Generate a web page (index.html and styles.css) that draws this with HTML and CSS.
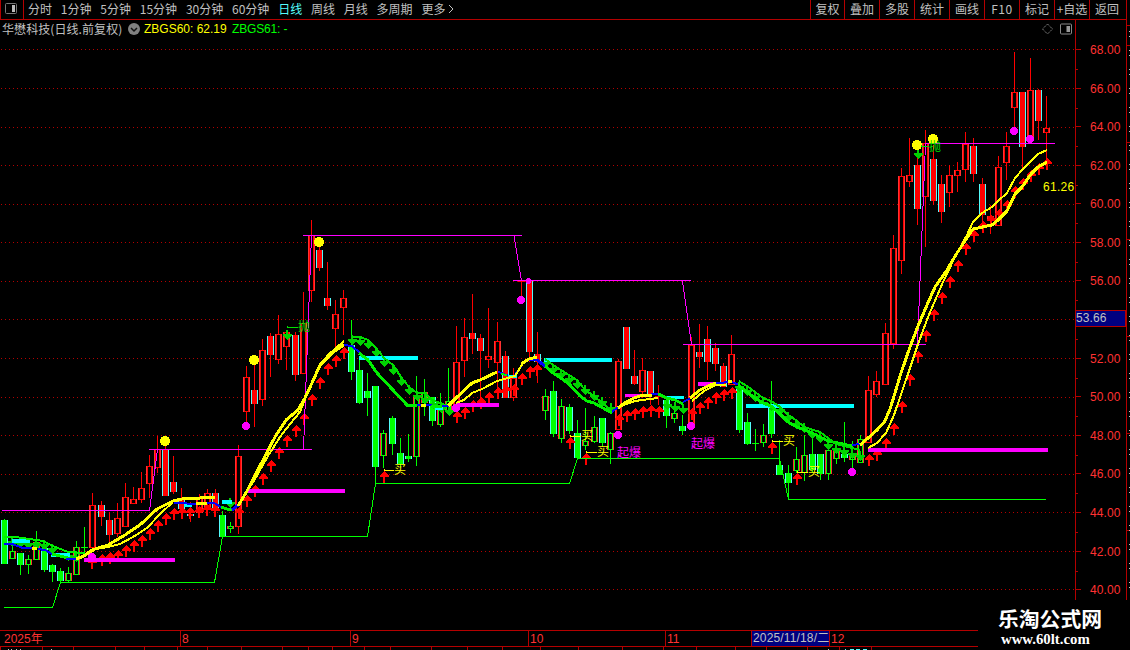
FILE: index.html
```html
<!DOCTYPE html>
<html lang="zh-CN">
<head>
    <meta charset="UTF-8">
    <meta name="viewport" content="width=device-width, initial-scale=1.0">
    <title>华懋科技 日线</title>
    <link rel="stylesheet" href="styles.css">
</head>
<body>

    <div class="terminal">
        <div class="main">
            <div class="toolbar">
                <div class="panel-toggle">
                    <svg width="12" height="11" viewBox="0 0 12 11"><rect x="0.5" y="0.5" width="11" height="10" rx="1" fill="none" stroke="#777"/><rect x="7" y="2" width="3" height="7" fill="#bbb"/></svg>
                </div>
                <div class="periods">
                    <span>分时</span><span>1分钟</span><span>5分钟</span><span>15分钟</span><span>30分钟</span><span>60分钟</span><span class="active">日线</span><span>周线</span><span>月线</span><span>多周期</span><span>更多<svg class="more" width="8" height="10" viewBox="0 0 8 10"><path d="M2 1L6 5L2 9" fill="none" stroke="#c0c0c0"/></svg></span>
                </div>
                <div class="actions">
                    <span class="first">复权</span><span>叠加</span><span>多股</span><span>统计</span><span>画线</span><span class="key">F10</span><span>标记</span><span>+自选</span><span class="last">返回</span>
                </div>
            </div>

            <div class="body">
                <div class="plot">
                    <div class="info">
                        <span class="stock">华懋科技(日线.前复权)</span>
                        <svg width="12" height="12" viewBox="0 0 12 12"><circle cx="6" cy="6" r="6" fill="#808080"/><path d="M3 5L6 8L9 5" fill="none" stroke="#111" stroke-width="1.5"/></svg>
                        <span class="v60">ZBGS60: 62.19</span>
                        <span class="v61">ZBGS61: -</span>
                        <svg class="tools" width="30" height="12" viewBox="0 0 30 12"><path d="M5.5 1L10.5 6L5.5 11L0.5 6Z" fill="none" stroke="#888" stroke-dasharray="1.4 0.8"/><rect x="18.5" y="1" width="11" height="10" rx="1" fill="none" stroke="#888"/><rect x="24.5" y="3" width="3.5" height="6" fill="#999"/></svg>
                    </div>
                    <svg id="chart" class="chart" width="1075" height="590" viewBox="0 40 1075 590"></svg>
                </div>
                <div class="price-axis">
                    <div class="prices" id="prices"></div>
                    <div class="cursor-price">53.66</div>
                </div>
            </div>

            <div class="time-axis">
                <div class="m1">2025年</div>
                <div class="m2">8</div>
                <div class="m3">9</div>
                <div class="m4">10</div>
                <div class="m5">11</div>
                <div class="cursor-date">2025/11/18/二</div>
                <div class="m6">12</div>
            </div>
            <svg class="bottom-strip" id="strip" width="1126" height="3" viewBox="0 647 1126 3"></svg>
        </div>
        <svg class="side" id="side" width="4" height="650" viewBox="1126 0 4 650"></svg>
        <div class="brand">
            <div class="brand-name">乐淘公式网</div>
            <div class="brand-url">www.60lt.com</div>
        </div>
    </div>

    <script src="script.js"></script>
</body>
</html>
```
FILE: styles.css
```css
body {
    margin: 0;
    background: #000;
    color: #c0c0c0;
    font-family: "Liberation Sans", "Noto Sans CJK SC", sans-serif;
    font-size: 12px;
    overflow: hidden;
}

.terminal {
    position: relative;
    display: flex;
    width: 1130px;
    height: 650px;
    overflow: hidden;
}

.main {
    width: 1126px;
}

svg {
    display: block;
    flex: none;
}

/* Toolbar */
.toolbar {
    display: flex;
    box-sizing: border-box;
    height: 20px;
    border-bottom: 1px solid #b40000;
    line-height: 18px;
    white-space: nowrap;
    font-family: "Noto Sans CJK SC", sans-serif;
}

.panel-toggle {
    box-sizing: border-box;
    width: 24px;
    padding: 3px 0 0 4px;
    border-left: 1px solid #b40000;
    border-right: 1px solid #b40000;
}

.periods {
    display: flex;
    flex: 1;
    gap: 8.8px;
    padding-left: 4px;
}

.periods .active {
    color: #54fcfc;
}

.more {
    display: inline-block;
    margin-left: 2px;
}

.actions {
    display: flex;
}

.actions span {
    box-sizing: border-box;
    width: 35px;
    border-left: 1px solid #b40000;
    text-align: center;
}

.actions .first {
    width: 34px;
}

.actions .key {
    letter-spacing: 0.6px;
}

.actions .last {
    width: 37px;
    padding-right: 2px;
}

/* Chart */
.body {
    display: flex;
    height: 610px;
}

.plot {
    width: 1075px;
}

.info {
    display: flex;
    align-items: center;
    box-sizing: border-box;
    height: 20px;
    padding: 0 3px 2px 2px;
    line-height: 18px;
    white-space: nowrap;
}

.stock {
    width: 126px;
    font-family: "Noto Sans CJK SC", sans-serif;
    letter-spacing: 0.08px;
}

.v60 {
    width: 84px;
    margin-left: 4px;
    color: #ffff00;
}

.v61 {
    margin-left: 4px;
    color: #00ff00;
    letter-spacing: -0.15px;
}

.tools {
    margin-left: auto;
}

.chart {
    shape-rendering: crispEdges;
}

.chart text {
    font-size: 12px;
    font-family: "Noto Sans CJK SC", sans-serif;
}

.chart .last-price {
    font-family: "Liberation Sans", sans-serif;
    letter-spacing: 0.3px;
}

/* Price scale */
.price-axis {
    position: relative;
    box-sizing: border-box;
    width: 51px;
    border-left: 1px solid #b40000;
}

.prices {
    padding-top: 20px;
}

.price {
    display: flex;
    align-items: flex-start;
    height: 38.58px;
    color: #ff3232;
    line-height: 20px;
    letter-spacing: 0.1px;
}

.price::before {
    content: "";
    width: 5px;
    height: 1px;
    margin: 9px 9px 0 0;
    background: #b40000;
}

.price::after {
    content: "";
    order: -1;
    width: 2px;
    height: 1px;
    margin: 29px -2px 0 0;
    background: #b40000;
}

.cursor-price {
    position: absolute;
    top: 290px;
    left: 0;
    box-sizing: border-box;
    width: 50px;
    height: 17px;
    border: 1px solid #b40000;
    border-left: 0;
    background: #000080;
    line-height: 15px;
    letter-spacing: 0.1px;
}

/* Date scale */
.time-axis {
    display: flex;
    box-sizing: border-box;
    height: 17px;
    border-top: 1px solid #b40000;
    border-bottom: 1px solid #b40000;
    color: #ff3232;
    line-height: 16px;
    white-space: nowrap;
}

.time-axis div {
    box-sizing: border-box;
    padding-left: 1px;
    border-left: 1px solid #b40000;
}

.time-axis .m1 {
    width: 180px;
    padding-left: 4px;
    border-left: 0;
}

.time-axis .m2 {
    width: 170px;
}

.time-axis .m3 {
    width: 178px;
}

.time-axis .m4 {
    width: 137px;
}

.time-axis .m5 {
    width: 86px;
}

.time-axis .cursor-date {
    width: 78px;
    background: #000080;
    color: #c0c0c0;
    line-height: 14px;
    letter-spacing: 0.15px;
}

.time-axis .m6 {
    width: 149px;
}

.bottom-strip,
.side {
    shape-rendering: crispEdges;
}

/* Site badge */
.brand {
    position: absolute;
    left: 978px;
    top: 600px;
    box-sizing: border-box;
    width: 152px;
    height: 50px;
    padding: 6px 0 0 20px;
    background: #000;
    color: #fff;
    white-space: nowrap;
}

.brand-name {
    font: bold 20.8px/25px "Noto Sans CJK SC", sans-serif;
}

.brand-url {
    padding: 1px 0 0 3px;
    font: bold 14.8px/15px "Liberation Serif", serif;
}
```
FILE: script.js
```js
// type: r = hollow red, c = solid red, g = solid green, h = hollow green
// [x, type, high, bodyTop, bodyBottom, low]
const candles = [
    [4, "g", 519, 520, 564, 564], [12, "h", 546, 551, 559, 559], [20, "g", 553, 553, 565, 575],
    [28, "h", 555, 559, 565, 574], [36, "h", 531, 542, 560, 560], [44, "g", 540, 548, 570, 572],
    [52, "g", 564, 565, 572, 582], [60, "g", 568, 571, 581, 582], [68, "h", 567, 573, 581, 582],
    [76, "h", 541, 547, 575, 575], [84, "d", 527, 547, 548, 553], [92, "r", 493, 505, 548, 548],
    [101, "c", 501, 505, 517, 526], [109, "c", 512, 520, 535, 542], [117, "r", 503, 518, 534, 537],
    [125, "r", 483, 497, 527, 527], [133, "r", 487, 499, 504, 504], [141, "r", 472, 488, 500, 503],
    [149, "r", 455, 466, 484, 498], [157, "r", 436, 449, 468, 473], [165, "c", 445, 449, 496, 496],
    [173, "c", 456, 482, 492, 494], [181, "c", 488, 499, 509, 510], [190, "c", 502, 514, 516, 522],
    [199, "r", 494, 497, 513, 513], [207, "r", 489, 493, 508, 515], [215, "c", 489, 493, 510, 514],
    [222, "g", 511, 515, 537, 537], [230, "h", 522, 526, 529, 533], [238, "r", 445, 456, 527, 534],
    [246, "r", 366, 377, 412, 425], [254, "c", 360, 390, 404, 427], [262, "r", 339, 350, 400, 406],
    [270, "c", 333, 336, 355, 377], [278, "r", 315, 334, 360, 364], [286, "r", 332, 332, 347, 370],
    [295, "c", 332, 335, 375, 381], [303, "r", 292, 323, 374, 374], [311, "r", 220, 235, 291, 302],
    [319, "c", 245, 250, 268, 271], [327, "c", 262, 298, 306, 310], [335, "r", 300, 314, 329, 347],
    [343, "r", 290, 298, 308, 335], [351, "g", 320, 345, 372, 380], [359, "g", 358, 370, 403, 404],
    [367, "g", 373, 391, 398, 416], [375, "g", 386, 386, 467, 484], [383, "h", 430, 433, 456, 468],
    [392, "g", 416, 418, 444, 455], [400, "g", 438, 453, 464, 468], [408, "g", 434, 456, 459, 462],
    [416, "h", 376, 397, 457, 466], [424, "h", 379, 392, 403, 416], [432, "g", 397, 397, 421, 426],
    [440, "h", 393, 405, 425, 427], [448, "h", 368, 401, 411, 411], [456, "r", 326, 362, 407, 407],
    [464, "r", 318, 337, 361, 377], [472, "c", 294, 333, 339, 354], [480, "c", 334, 338, 351, 400],
    [488, "r", 308, 356, 360, 368], [497, "r", 322, 341, 363, 388], [505, "c", 351, 356, 398, 398],
    [513, "r", 368, 378, 398, 401], [521, "d2", 281, 281, 282, 300], [529, "c", 281, 281, 352, 362],
    [537, "c", 332, 354, 362, 383], [545, "h", 389, 396, 411, 420], [553, "g", 381, 391, 434, 437],
    [561, "h", 399, 406, 439, 443], [569, "g", 404, 407, 431, 434], [577, "g", 420, 433, 458, 459],
    [585, "h", 408, 441, 446, 450], [594, "h", 416, 427, 442, 443], [602, "g", 418, 418, 443, 447],
    [610, "h", 432, 433, 450, 464], [618, "r", 359, 361, 430, 430], [626, "c", 327, 327, 369, 369],
    [634, "c", 350, 376, 384, 385], [642, "r", 358, 370, 392, 398], [650, "c", 371, 371, 394, 405],
    [658, "d2", 385, 396, 397, 405], [666, "g", 396, 400, 416, 428], [674, "h", 402, 413, 419, 423],
    [682, "g", 415, 426, 431, 435], [691, "r", 337, 345, 425, 425], [699, "c", 324, 352, 357, 368],
    [707, "c", 326, 339, 362, 380], [715, "c", 343, 348, 364, 371], [723, "c", 363, 366, 387, 387],
    [731, "r", 335, 354, 385, 385], [739, "g", 380, 388, 430, 433], [747, "g", 413, 422, 444, 445],
    [755, "d", 429, 442, 444, 451], [763, "h", 424, 435, 443, 447], [771, "g", 381, 406, 434, 438],
    [779, "g", 440, 465, 475, 475], [788, "g", 465, 473, 483, 499], [796, "h", 447, 459, 471, 473],
    [804, "h", 435, 455, 473, 481], [812, "g", 439, 454, 470, 472], [820, "g", 454, 454, 474, 480],
    [828, "h", 445, 450, 474, 480], [836, "h", 444, 451, 459, 464], [844, "g", 422, 454, 458, 462],
    [852, "h", 441, 455, 460, 468], [860, "h", 435, 439, 463, 463], [868, "r", 376, 390, 443, 443],
    [876, "r", 371, 381, 395, 397], [885, "r", 323, 333, 385, 385], [893, "r", 235, 248, 344, 349],
    [901, "r", 168, 176, 261, 274], [909, "r", 138, 175, 182, 187], [917, "c", 157, 165, 209, 225],
    [925, "r", 130, 143, 197, 247], [933, "c", 145, 159, 201, 205], [941, "c", 175, 184, 212, 223],
    [949, "r", 165, 175, 193, 207], [957, "r", 162, 170, 176, 192], [965, "r", 132, 144, 170, 182],
    [973, "c", 138, 146, 174, 182], [982, "c", 178, 184, 215, 232], [990, "r", 205, 216, 220, 234],
    [998, "r", 156, 167, 226, 226], [1006, "r", 132, 146, 163, 180], [1014, "r", 52, 92, 108, 128],
    [1022, "c", 92, 92, 147, 169], [1030, "r", 58, 90, 137, 142], [1038, "c", 89, 90, 121, 140],
    [1046, "r", 96, 128, 133, 168]
];

// [x, y of the tip]
const upArrows = [
    [92, 557], [102, 554], [110, 552], [118, 550], [126, 545], [134, 540], [142, 535], [150, 528],
    [158, 520], [166, 513], [174, 508], [182, 507], [190, 507], [199, 506], [207, 504], [215, 505],
    [239, 507], [247, 495], [255, 485], [263, 473], [271, 460], [279, 447], [287, 435], [296, 425],
    [304, 413], [312, 394], [320, 377], [328, 363], [336, 355], [344, 347], [384, 471], [457, 411],
    [465, 407], [473, 400], [481, 397], [489, 392], [498, 387], [506, 385], [514, 384], [522, 373],
    [530, 366], [537, 364], [570, 437], [586, 453], [619, 414], [627, 410], [635, 408], [643, 406],
    [651, 405], [659, 406], [692, 408], [700, 402], [708, 397], [716, 392], [724, 389], [732, 387],
    [772, 442], [797, 473], [869, 454], [877, 449], [886, 438], [894, 423], [902, 401], [910, 374],
    [918, 351], [926, 330], [934, 309], [942, 292], [950, 276], [958, 260], [966, 243], [974, 230],
    [983, 221], [991, 215], [999, 209], [1007, 200], [1015, 186], [1023, 178], [1031, 170],
    [1039, 163], [1047, 158]
];

const downArrows = [
    [12, 547], [20, 548], [28, 549], [36, 549], [44, 550], [52, 554], [68, 561], [76, 562],
    [230, 508], [287, 340], [352, 345], [360, 346], [368, 349], [376, 357], [384, 367], [393, 375],
    [401, 386], [409, 395], [417, 401], [425, 404], [433, 409], [441, 413], [449, 416],
    [545, 368], [553, 374], [561, 379], [569, 384], [577, 389], [585, 395], [594, 401], [602, 407],
    [611, 413], [667, 410], [675, 412], [683, 414], [739, 392], [747, 396], [755, 402], [763, 408],
    [771, 411], [780, 415], [788, 422], [796, 429], [804, 433], [812, 439], [820, 443], [828, 450],
    [836, 454], [844, 456], [852, 459], [860, 461], [918, 159]
];

// [color, width, points]
const lines = [
    ["#f0f", 1, "2,510.5 149.5,510.5 157.5,449.5"], ["#f0f", 1, "149,449.5 312,449.5"],
    ["#f0f", 1, "303.5,449.5 311.5,235.5"], ["#f0f", 1, "303,235.5 514,235.5 521.5,280.5"], ["#f0f", 1, "513,235.5 522,235.5"],
    ["#f0f", 1, "513,280.5 691,280.5"], ["#f0f", 1, "682.5,281 691.5,344.5"],
    ["#f0f", 1, "683,344.5 926,344.5"], ["#f0f", 1, "917.5,344 925.5,143.5 1055,143.5"],
    ["#0f0", 1, "4,607.5 52.5,607.5 60.5,582.5 214.5,582.5 222.5,536.5 367.5,536.5 375.5,483.5 569.5,483.5 577.5,458.5 779.5,458.5 788.5,499.5 1046,499.5"],
    ["#0ff", 4, "12,541 30,541"], ["#0ff", 4, "51,555 70,555"], ["#0ff", 3, "184,505 192,505"],
    ["#0ff", 4, "222,502 232,502"], ["#0ff", 4, "359,358 418,358"], ["#0ff", 3, "435,408 443,408"],
    ["#0ff", 4, "544,360 612,360"], ["#0ff", 3, "667,397 684,397"], ["#0ff", 4, "746,406 854,406"],
    ["#f0f", 4, "84,560 175,560"], ["#f0f", 4, "246,491 345,491"], ["#f0f", 4, "456,405 499,405"],
    ["#f0f", 3, "625,395 650,395"], ["#f0f", 4, "698,384 716,384"], ["#f0f", 4, "868,450 1048,450"],
    ["#00f000", 2, "4,537 15,537 23,538 43,541 53,546 68,552 85,553"],
    ["#00f", 2, "4,544 12,544 23,548 32,548"], ["#ff0", 3, "32,548 37,548"], ["#00f", 2, "38,549 45,550 52,554"],
    ["#00f000", 3, "52,554 60,556 68,558"], ["#00f", 2, "66,559 76,559"],
    ["#00f", 2, "174,503 184,503 190,504 200,504"], ["#ff0", 3, "196,504 207,503"],
    ["#00f", 2, "207,503 214,503 221,507"], ["#00f000", 3, "221,507 230,510 233,509"], ["#00f", 3, "232,510 238,505"],
    ["#00f", 2, "344,345 352,346 360,353"],
    ["#00f000", 3, "359,353 368,360 377,373 407,405 417,405"],
    ["#00dc00", 2, "352,337 360,337 368,340 376,348 384,358 393,365 401,377 409,387 417,393 425,393 432,400 440,403 448,406"],
    ["#00f", 2, "417,405 432,405"], ["#ff0", 3, "421,405 426,405"], ["#00f000", 3, "431,406 442,406"], ["#00f", 2, "442,406 449,406"],
    ["#00f", 2, "498,372 505,374"], ["#00f", 2, "506,375 513,377 521,367"], ["#00f000", 2, "501,374 507,375"],
    ["#0ff", 3, "508,376 517,376"], ["#00f", 3, "529,359 537,360 545,366"],
    ["#00f000", 3, "545,366 553,373 561,378 570,385 580,396 587,401 594,403 612,413"],
    ["#00dc00", 2, "545,359 553,365 561,370 569,375 577,380 585,390 594,396 602,403 611,410"],
    ["#00f", 2, "612,412 618,407"], ["#00f", 2, "651,394 659,394"],
    ["#00f000", 3, "658,394 667,398 675,400 683,404"], ["#00f", 2, "683,402 691,398"],
    ["#00f", 2, "716,383 732,382 739,385"], ["#ff0", 3, "728,381 732,381"],
    ["#00f000", 3, "738,385 747,392 755,398 763,403 771,406 779,413 788,422 797,427 812,433 828,441 852,446"],
    ["#00dc00", 2, "740,382 747,386 755,392 763,398 771,401 780,407 788,415 796,420 804,427 820,432 836,444 860,450"],
    ["#00f", 2, "852,445 861,444"],
    ["#ff0", 3, "76,559 84,556 92,550 108,545 125,535 141,524 157,509 165,505 173,501 182,499 200,498 215,497"],
    ["#ff0", 2, "84,556 96,549 108,547 120,544 133,537 147,528 160,514 173,502"],
    ["#ff0", 3, "238,506 247,491 263,460 275,437 286,420 298,410 305,398 312,383 320,365 328,357 336,350 344,345"],
    ["#ff0", 2, "247,491 255,479 268,456 280,437 290,424 300,412 306,397 318,368 328,355 336,348 344,341"],
    ["#ff0", 3, "448,406 456,398 472,383 480,380 497,372"],
    ["#ff0", 2, "456,403 464,400 472,393 482,389 497,381 515,376 523,363 529,359"],
    ["#ff0", 3, "521,364 529,359 537,357"],
    ["#ff0", 3, "618,408 626,402 634,398 643,395 652,395"], ["#ff0", 2, "618,408 626,404 635,401 642,400 658,398"],
    ["#ff0", 3, "690,398 700,390 708,386 716,383"], ["#ff0", 2, "692,401 704,391 716,385 726,385"],
    ["#ff0", 3, "860,445 868,438 877,430 885,421 890,409 895,393 901,373 910,347 918,326 927,305 935,287 947,270 957,253 967,238 973,229 992,225 998,220 1007,211 1015,194 1022,187 1031,174 1038,167 1047,162"],
    ["#ff0", 2, "868,448 877,443 886,433 894,415 907,377 917,347 928,317 943,282 955,257 967,235 973,222 982,213 992,207 998,201 1007,193 1015,178 1023,169 1031,161 1038,154 1047,150"]
];

const dots = [
    ["#ff0", 5, 165, 441], ["#ff0", 5, 254, 360], ["#ff0", 5, 319, 242], ["#ff0", 5, 917, 145], ["#ff0", 5, 933, 139],
    ["#f0f", 4, 246, 426], ["#f0f", 4, 521, 300], ["#f0f", 3, 528.5, 281], ["#f0f", 4, 618, 435], ["#f0f", 4, 691, 426],
    ["#f0f", 4, 852, 472], ["#f0f", 4, 1014, 131], ["#f0f", 4, 1030, 139], ["#f0f", 4, 456, 408], ["#f0f", 4, 92, 557]
];

// [text, color, x, baseline, tail start, tail y]
const notes = [
    ["抛", "#00e000", 298, 331, 287, 327], ["抛", "#00e000", 929, 151, 921, 146],
    ["买", "#ff0", 394, 474, 384, 470], ["买", "#ff0", 581, 440, 570, 436], ["买", "#ff0", 597, 456, 586, 452],
    ["买", "#ff0", 783, 445, 772, 441], ["买", "#ff0", 808, 476, 797, 472]
];

const rect = (x, y, w, h, fill) => `<rect x="${x}" y="${y}" width="${w}" height="${h}" fill="${fill}"/>`;

function drawCandle([x, type, high, top, bottom, low]) {
    const h = bottom - top;
    const red = type === "r" || type === "c" || type === "d2";
    const color = red ? "#ff0000" : "#00ff00";
    let out = "";
    if (top > high) out += rect(x, high, 1, top - high, color);
    if (low > bottom) out += rect(x, bottom, 1, low - bottom, color);

    if (type === "d" || type === "d2") {
        out += rect(x, top, 1, h, color) + rect(x - 3, Math.round((top + bottom - 1) / 2), 7, 1, color);
    } else if (type === "r" || type === "h") {
        out += rect(x - 3, top, 7, h, "#ff3232") + rect(x - 2, top, 5, h, color);
        out += rect(x - 1, top + 1, 3, Math.max(h - 2, 1), "#000");
    } else {
        out += rect(x - 3, top, 7, h, "#54fcfc") + rect(x - 2, top, 5, h, color);
    }
    return out;
}

let html = "";

// price grid
for (let i = 0; i < 15; i++) {
    const y = Math.round(49.4 + i * 38.57) + 0.5;
    html += `<path d="M1 ${y}H1075" stroke="#b40000" stroke-dasharray="1 3"/>`;
}

html += candles.map(drawCandle).join("");

upArrows.forEach(([x, y]) => {
    html += `<path d="M${x} ${y}h1v1h1v1h1v1h1v1h1v2h-4v6h-2v-6h-3v-2h1v-1h1v-1h1v-1h1z" fill="#ff0000"/>`;
});

downArrows.forEach(([x, y]) => {
    html += `<path d="M${x} ${y}h1v-1h1v-1h1v-1h1v-1h1v-2h-4v-4h-2v4h-3v2h1v1h1v1h1v1h1z" fill="#00d200"/>`;
});

lines.forEach(([color, width, points]) => {
    html += `<polyline points="${points}" fill="none" stroke="${color}" stroke-width="${width}"/>`;
});

dots.forEach(([color, r, x, y]) => {
    html += `<circle cx="${x}" cy="${y}" r="${r}" fill="${color}"/>`;
});

notes.forEach(([text, color, x, y, tx, ty]) => {
    html += `<path d="M${x} ${ty + 0.5}H${tx}m0.5 0.5v-2" fill="none" stroke="${color}"/>`;
    html += `<text x="${x}" y="${y}" fill="${color}">${text}</text>`;
});

html += `<text x="617" y="457" fill="#f0f">起爆</text><text x="691" y="448" fill="#f0f">起爆</text>`;
html += `<text class="last-price" x="1043" y="191" fill="#ff0">61.26</text>`;

document.getElementById("chart").innerHTML = html;

// the 54.00 label is hidden by the cursor price
let prices = "";
for (let p = 68; p >= 40; p -= 2) {
    prices += `<div class="price">${p === 54 ? "" : p.toFixed(2)}</div>`;
}
document.getElementById("prices").innerHTML = prices;

let strip = "";
[0, 42, 73, 115, 144, 177, 207, 241, 282, 308, 332, 364, 390, 431, 467, 502, 540, 578, 622, 663, 696, 735, 766, 807, 839, 871].forEach(x => {
    strip += rect(x, 647, 1, 3, "#b40000");
});
[8, 11, 16, 20, 51, 828, 845, 850, 856, 863].forEach((x, i) => {
    strip += rect(x, 649, i > 6 ? 4 : 1, 1, i > 5 ? "#54fcfc" : "#c0c0c0");
});
document.getElementById("strip").innerHTML = strip;

let side = rect(1126, 0, 1, 650, "#b40000");
[25, 45, 142, 239, 336, 433, 530].forEach(y => {
    side += rect(1127, y, 3, 1, "#b40000");
});
for (let y = 31; y < 600; y += 19) {
    side += rect(1129, y, 1, 1, "#c0c0c0") + rect(1129, y + 5, 1, 1, "#c0c0c0");
}
document.getElementById("side").innerHTML = side;
```
